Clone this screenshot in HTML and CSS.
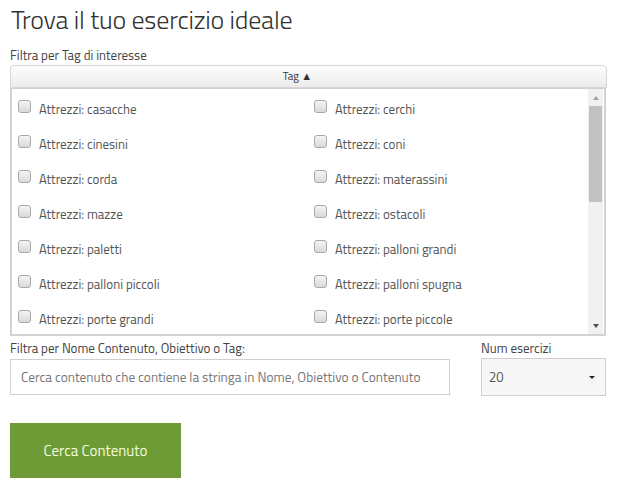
FILE: index.html
```html
<!DOCTYPE html>
<html lang="it">
<head>
<meta charset="utf-8">
<title>Trova il tuo esercizio ideale</title>
<link rel="stylesheet" href="styles.css">
</head>
<body>
<div class="page">
  <h1 class="title">Trova il tuo esercizio ideale</h1>
  <div class="label">Filtra per Tag di interesse</div>
  <div class="tag-header">Tag &#9650;</div>
  <div class="tag-box">
    <div class="tag-list">
      <label class="tag"><span class="cb"></span>Attrezzi: casacche</label>
      <label class="tag"><span class="cb"></span>Attrezzi: cerchi</label>
      <label class="tag"><span class="cb"></span>Attrezzi: cinesini</label>
      <label class="tag"><span class="cb"></span>Attrezzi: coni</label>
      <label class="tag"><span class="cb"></span>Attrezzi: corda</label>
      <label class="tag"><span class="cb"></span>Attrezzi: materassini</label>
      <label class="tag"><span class="cb"></span>Attrezzi: mazze</label>
      <label class="tag"><span class="cb"></span>Attrezzi: ostacoli</label>
      <label class="tag"><span class="cb"></span>Attrezzi: paletti</label>
      <label class="tag"><span class="cb"></span>Attrezzi: palloni grandi</label>
      <label class="tag"><span class="cb"></span>Attrezzi: palloni piccoli</label>
      <label class="tag"><span class="cb"></span>Attrezzi: palloni spugna</label>
      <label class="tag"><span class="cb"></span>Attrezzi: porte grandi</label>
      <label class="tag"><span class="cb"></span>Attrezzi: porte piccole</label>
    </div>
    <div class="scrollbar">
      <div class="sb-btn"><span class="tri-up"></span></div>
      <div class="sb-track"><div class="sb-thumb"></div></div>
      <div class="sb-btn"><span class="tri-down"></span></div>
    </div>
  </div>
  <div class="filters">
    <div class="field field-text">
      <div class="label">Filtra per Nome Contenuto, Obiettivo o Tag:</div>
      <div class="input">Cerca contenuto che contiene la stringa in Nome, Obiettivo o Contenuto</div>
    </div>
    <div class="field field-num">
      <div class="label">Num esercizi</div>
      <div class="select"><span>20</span><span class="caret"></span></div>
    </div>
  </div>
  <button class="btn">Cerca Contenuto</button>
</div>
</body>
</html>
```
FILE: styles.css
```css
* { box-sizing: border-box; }
html, body { margin: 0; padding: 0; background: #fff; }
body {
  font-family: "Titillium Web", Lato, "Open Sans", sans-serif;
  color: #444;
}
.page {
  width: 597px;
  margin-left: 10px;
  display: flex;
  flex-direction: column;
}
.title {
  margin: 0;
  font-size: 26px;
  font-weight: 300;
  line-height: 39px;
  color: #333;
  padding-left: 1px;
  letter-spacing: -0.2px;
}
.label {
  font-size: 13px;
  line-height: 20px;
  color: #444;
  white-space: nowrap;
}
.page > .label { margin-top: 6px; }
.tag-header {
  height: 23px;
  border: 1px solid #d6d6d6;
  border-radius: 3px 4px 0 0;
  background: linear-gradient(#fdfdfd, #ececec);
  font-size: 11px;
  line-height: 21px;
  text-align: center;
  color: #333;
  padding-right: 22px;
}
.tag-box {
  height: 248px;
  border: 2px solid #d2d2d2;
  border-top: 1px solid #d2d2d2;
  display: flex;
  overflow: hidden;
  width: 596px;
}
.tag-list {
  flex: 1;
  display: grid;
  grid-template-columns: 296px 1fr;
  grid-auto-rows: 35px;
  padding-top: 2px;
  align-content: start;
  overflow: hidden;
}
.tag {
  display: flex;
  align-items: center;
  padding-left: 6px;
  font-size: 13px;
  color: #555;
}
.cb {
  width: 13px;
  height: 13px;
  margin-right: 8px;
  border: 1px solid #a9a9a9;
  border-radius: 3px;
  background: linear-gradient(#f4f4f4, #d9d9d9);
  margin-top: -4px;
}
.scrollbar {
  width: 15px;
  display: flex;
  flex-direction: column;
  background: #f1f1f1;
  margin-right: 1px;
}
.sb-btn {
  height: 17px;
  display: flex;
  align-items: center;
  justify-content: center;
}
.tri-up {
  width: 0; height: 0;
  border-left: 3.5px solid transparent;
  border-right: 3.5px solid transparent;
  border-bottom: 4px solid #a3a3a3;
}
.tri-down {
  width: 0; height: 0;
  border-left: 3.5px solid transparent;
  border-right: 3.5px solid transparent;
  border-top: 4px solid #505050;
}
.sb-track { flex: 1; padding: 0 1px; }
.sb-thumb {
  height: 96px;
  background: #c1c1c1;
}
.filters {
  display: flex;
  gap: 31px;
  margin-top: 2px;
}
.field-text { width: 440px; }
.field-num { width: 125px; }
.input {
  margin-top: 1px;
  height: 36px;
  border: 1px solid #cfcfcf;
  font-size: 13.4px;
  color: #777;
  line-height: 34px;
  padding-left: 10px;
  white-space: nowrap;
  overflow: hidden;
}
.select {
  height: 38px;
  border: 1px solid #cfcfcf;
  background: #f7f7f7;
  display: flex;
  align-items: center;
  justify-content: space-between;
  padding: 0 10px 0 7px;
  font-size: 13px;
  color: #555;
}
.caret {
  width: 0; height: 0;
  border-left: 3px solid transparent;
  border-right: 3px solid transparent;
  border-top: 3.5px solid #222;
}
.btn {
  margin-top: 27px;
  width: 171px;
  height: 55px;
  border: 0;
  background: #6e9b35;
  color: #f3fcd9;
  font-family: inherit;
  font-size: 15px;
  cursor: pointer;
  align-self: flex-start;
}
```
